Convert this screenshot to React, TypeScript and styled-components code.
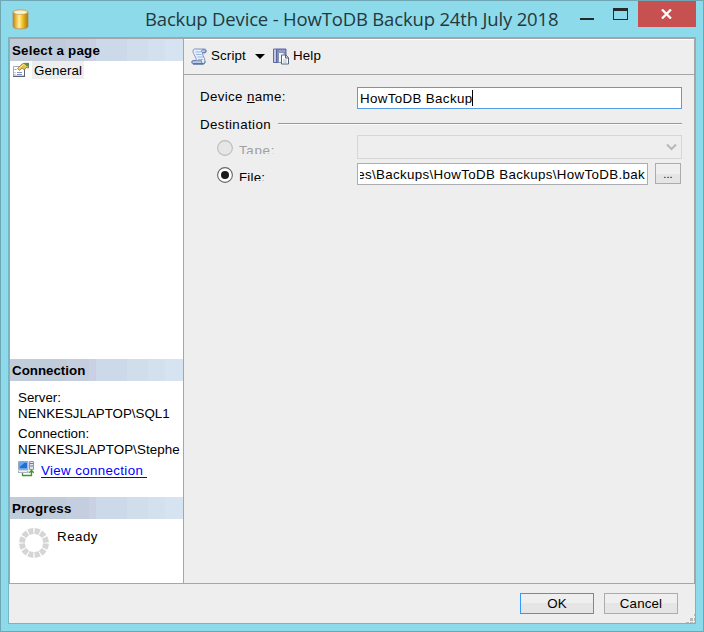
import React from "react";
import styled, { createGlobalStyle } from "styled-components";

const GlobalStyle = createGlobalStyle`
  * { box-sizing: border-box; }
  body {
    margin: 0;
    overflow: hidden;
    font-family: "Liberation Sans", Arial, sans-serif;
    font-size: 13.33px;
    line-height: 16px;
    color: #000;
  }
`;

const Window = styled.div`
  width: 704px;
  height: 632px;
  display: flex;
  flex-direction: column;
  background: #8ddbea;
  border: 1px solid #6fa7b4;
  padding: 0 7px 7px;
`;

const TitleBar = styled.header`
  height: 36px;
  flex: none;
  display: flex;
  align-items: flex-start;
`;

const AppIcon = styled.svg`
  margin: 8px 0 0 4px;
  flex: none;
`;

const Title = styled.h1<{ $spacing: number }>`
  margin: 5px 0 0 115px;
  width: 430px;
  font: 400 18.5px/26px "Open Sans", "Noto Sans", sans-serif;
  letter-spacing: ${(p) => p.$spacing}px;
  color: #26383d;
  white-space: nowrap;
`;

const Caption = styled.div`
  display: flex;
  margin-left: auto;
`;

const MinMax = styled.svg`
  display: block;
`;

const CloseButton = styled.button`
  width: 58px;
  height: 26px;
  border: 0;
  padding: 0;
  background: #c75050;
  display: flex;
  align-items: center;
  justify-content: center;
`;

const Client = styled.div`
  flex: 1;
  min-height: 0;
  border: 1px solid #77b5c2;
  background: #eee;
  display: flex;
  flex-direction: column;
`;

const Panels = styled.div`
  height: 546px;
  flex: none;
  display: flex;
  border: 1px solid #a5a5aa;
`;

const Sidebar = styled.aside`
  width: 174px;
  flex: none;
  background: #fff;
  border-right: 1px solid #a5a5aa;
  display: flex;
  flex-direction: column;
`;

const Section = styled.section<{ $height: number }>`
  height: ${(p) => p.$height}px;
  overflow: hidden;
`;

const SectionTitle = styled.h2<{ $spacing?: number }>`
  margin: 0;
  height: 22px;
  padding-left: 2px;
  font-size: 13.33px;
  font-weight: bold;
  line-height: 24px;
  letter-spacing: ${(p) => p.$spacing ?? 0}px;
  background: linear-gradient(
    90deg,
    #c1ccdb 0 56px,
    #c5cedf 56px 79px,
    #c9d2e4 79px 84px,
    #cccfe3 84px 86px,
    #cbd9e8 86px 117px,
    #d0deec 117px 138px,
    #d3e1ee 138px 155px,
    #d6e4f2 155px
  );
`;

const PageItem = styled.div`
  display: flex;
  height: 18px;
  padding-left: 3px;
`;

const PageName = styled.span`
  margin-left: 3px;
  padding: 2px 2px 0;
  width: 52px;
  background: #eee;
  letter-spacing: 0.1px;
`;

const Details = styled.div`
  padding: 9px 0 0 8px;
  width: 171px;
  white-space: nowrap;
  overflow: hidden;
`;

const Detail = styled.div<{ $gap?: number; $spacing?: number }>`
  margin-top: ${(p) => p.$gap ?? 0}px;
  letter-spacing: ${(p) => p.$spacing ?? 0}px;
`;

const LinkRow = styled.div`
  display: flex;
  margin-top: 3px;
`;

const Link = styled.a`
  margin: 2px 0 0 7px;
  width: 106px;
  height: 15px;
  line-height: 16px;
  color: #00f;
  border-bottom: 1px solid #00f;
  letter-spacing: 0.36px;
`;

const ProgressRow = styled.div`
  display: flex;
  padding: 9px 0 0 9px;
`;

const Ready = styled.span`
  margin: 1px 0 0 7px;
  letter-spacing: 0.5px;
`;

const Main = styled.main`
  flex: 1;
  min-width: 0;
`;

const Toolbar = styled.div`
  height: 36px;
  border-top: 1px solid #fff;
  border-bottom: 1px solid #a5a5aa;
  display: flex;
  align-items: center;
  padding: 0 0 2px 7px;
`;

const ToolText = styled.span<{ $width: number }>`
  width: ${(p) => p.$width}px;
  margin-left: 4px;
  letter-spacing: 0.15px;
`;

const DropArrow = styled.svg`
  margin: 0 8px 0 9px;
`;

const Form = styled.div`
  padding: 12px 12px 0 16px;
`;

const Row = styled.div<{ $height: number; $gap?: number }>`
  display: flex;
  height: ${(p) => p.$height}px;
  margin-top: ${(p) => p.$gap ?? 0}px;
`;

const Label = styled.label`
  width: 157px;
  padding-top: 2px;
  letter-spacing: 0.35px;
`;

const Mnemonic = styled.span`
  text-decoration: underline;
  text-underline-offset: 1px;
  text-decoration-thickness: 1px;
`;

const Field = styled.div<{ $focused?: boolean; $width: number }>`
  width: ${(p) => p.$width}px;
  height: 22px;
  border: 1px solid ${(p) => (p.$focused ? "#569de5" : "#abadb3")};
  background: #fff;
  padding: 3px 2px;
  display: flex;
  justify-content: ${(p) => (p.$focused ? "flex-start" : "flex-end")};
  white-space: nowrap;
`;

const FieldText = styled.span<{ $spacing: number; $end?: boolean }>`
  display: flex;
  min-width: 0;
  overflow: hidden;
  justify-content: ${(p) => (p.$end ? "flex-end" : "flex-start")};
  letter-spacing: ${(p) => p.$spacing}px;
`;

const Caret = styled.i`
  width: 1px;
  height: 16px;
  margin-top: -1px;
  background: #000;
`;

const GroupRule = styled.i`
  flex: 1;
  height: 2px;
  margin: 6px 0 0 7px;
  background: linear-gradient(#98989b 0 1px, #fafafa 1px);
`;

const GroupName = styled.span`
  width: 71px;
  letter-spacing: 0.4px;
`;

const Option = styled.div`
  width: 157px;
  padding-left: 17px;
  display: flex;
`;

const RadioIcon = styled.svg<{ $top: number }>`
  margin-top: ${(p) => p.$top}px;
`;

const OptionText = styled.span<{ $disabled?: boolean; $top: number; $height: number }>`
  margin: ${(p) => p.$top}px 0 0 5px;
  height: ${(p) => p.$height}px;
  overflow: hidden;
  letter-spacing: ${(p) => (p.$disabled ? 0.7 : 0.2)}px;
  color: ${(p) => (p.$disabled ? "#a0a0a0" : "#000")};
`;

const Combo = styled.div`
  width: 325px;
  height: 24px;
  border: 1px solid #d6d6d6;
  display: flex;
  align-items: center;
  justify-content: flex-end;
  padding-right: 4px;
`;

const PushButton = styled.button<{ $width: number; $primary?: boolean; $small?: boolean }>`
  width: ${(p) => p.$width}px;
  height: 21px;
  padding: 0;
  border: 1px solid ${(p) => (p.$primary ? "#3399ff" : "#acacac")};
  background: linear-gradient(#efefef 0 50%, #e5e5e5 50%);
  color: #000;
  font-family: inherit;
  font-size: ${(p) => (p.$small ? 11 : 13.33)}px;
  line-height: ${(p) => (p.$small ? 16 : 19)}px;
  letter-spacing: 0.15px;
`;

const Footer = styled.footer`
  flex: 1;
  display: flex;
  justify-content: flex-end;
  gap: 10px;
  padding: 9px 0 0;
`;

const Grip = styled.svg`
  align-self: flex-end;
  margin-left: -2px;
`;

const DatabaseIcon = () => (
  <AppIcon width="18" height="22" viewBox="0 0 18 22">
    <defs>
      <linearGradient id="gold">
        <stop offset="0" stopColor="#b98216" />
        <stop offset=".18" stopColor="#e9b43a" />
        <stop offset=".42" stopColor="#fff0a0" />
        <stop offset=".65" stopColor="#f1bd20" />
        <stop offset="1" stopColor="#a87512" />
      </linearGradient>
    </defs>
    <path d="M1 2.700v14.800c0 1.600 3 2.300 7.500 2.300s7.500-.7 7.500-2.300V2.700z" fill="url(#gold)" stroke="#b0915a" strokeWidth=".8" />
    <ellipse cx="8.500" cy="3.100" rx="7.400" ry="2.300" fill="#f5e8b0" stroke="#b79c62" strokeWidth=".8" />
    <ellipse cx="8.500" cy="3.400" rx="5.600" ry="1.400" fill="#faf2cd" />
  </AppIcon>
);

const PropertiesIcon = () => (
  <svg width="16" height="18" viewBox="0 0 16 18">
    <path d="M.5 5.500h11v9.500H.5z" fill="#fff" stroke="#a5a9b2" />
    <path d="M0 15.500h12M11.500 8v8" stroke="#5b6270" />
    <path d="M1.500 8.500h2m-2 3h1m-1 2h1" stroke="#8a97b8" />
    <path d="M4 11.500h5M4 13.500h5" stroke="#8390d0" />
    <path d="M4.500 7.500 9 3l2-.7h4.500V7L13 6.500 11.500 9 9 7 6.500 9.500z" fill="#e9be4c" stroke="#8f7a3a" strokeWidth=".8" />
    <path d="m6 7.500 4.500-4 2.500 1" fill="none" stroke="#fff0a8" />
    <path d="M11 2h5v4.500l-2-1.500-2-1z" fill="#5d8c54" />
  </svg>
);

const ScriptIcon = () => (
  <svg width="16" height="17" viewBox="0 0 16 17">
    <path d="M3.500 1h10c2.500 0 2.500 4 0 4H11.500c0 3 2.500 5 2.500 8 0 2-1 3-2.500 3h-9C0 16 0 12.500 2 12.500h3C6 9.500 2 6.500 2 3c0-1 .5-2 1.500-2z" fill="#e6f0fd" stroke="#7d93c4" />
    <path d="M4.500 4h5.500M5 6.500h5.500M6.500 9H12M7 11.500h5" stroke="#9db5dc" />
    <path d="M2 12.700h8.500c0 2 .5 2.800 1.500 2.800H2.500c-1.500 0-1.500-1.500-.5-2.800zM12 1.500c-2 .5-2 3 0 3h2.500V2z" fill="#b8cbe9" stroke="#5d72a3" strokeWidth=".8" />
    <path d="M2 16h10c1.500 0 2-1 2-2.500" fill="none" stroke="#4c608c" />
  </svg>
);

const HelpIcon = () => (
  <svg width="16" height="17" viewBox="0 0 16 17">
    <path d="M.5 1h12.500v13.500H.5z" fill="#7f86c4" stroke="#6268a5" />
    <path d="M1 1.500h2.500v12.500H1z" fill="#c3c7e6" />
    <path d="M3.500 1v13.500" stroke="#5e649f" />
    <path d="M6 3h6" stroke="#a9b0e0" />
    <path d="M5.500 4.500h4.500l2 2v8h-6.500z" fill="#eff4fb" stroke="#8696b0" />
    <path d="M8.500 7H13l2.500 2.500V16h-7z" fill="#fff" stroke="#52647f" />
    <path d="M12.500 7v3h3" fill="#cad5e2" stroke="#52647f" />
    <path d="M10 12h4m-4 2h4" stroke="#a9b8cc" />
  </svg>
);

const ConnectionIcon = () => (
  <svg width="16" height="16" viewBox="0 0 16 16">
    <path d="M.5.5h9.500v8H.5z" fill="#b9cfe9" stroke="#9ba9c0" />
    <path d="M1.500 1.500h7.500v6H1.500z" fill="#1f6fd6" />
    <path d="M1.500 1.500H7L1.500 6z" fill="#65a9f5" />
    <path d="M0 9.500h10.500v2.500H0z" fill="#a7b4c5" />
    <path d="M1 10.500h8" stroke="#eef4fb" />
    <path d="M11.500.5h4v8h-4z" fill="#dfe5ee" stroke="#8d98a9" />
    <path d="M12 2.500h3M12 5h3" stroke="#6b7e9d" />
    <path d="M4.500 12v2.500h9V9.500m-2.200 2.200 2.200-2.200 2.200 2.200" fill="none" stroke="#439321" strokeWidth="1.300" />
  </svg>
);

const Spinner = () => (
  <svg width="31" height="31" viewBox="0 0 31 31">
    {Array.from({ length: 12 }, (_, i) => (
      <path
        key={i}
        d="M11.900.4a15 15 0 0 1 6.200 0l-1.100 5.700a9.300 9.300 0 0 0-4 0z"
        fill="#d5d5d5"
        transform={`rotate(${15 + i * 30} 15 15)`}
      />
    ))}
  </svg>
);

const Radio = ({ selected, top }: { selected?: boolean; top: number }) => (
  <RadioIcon width="17" height="17" viewBox="0 0 17 17" $top={top}>
    <circle cx="8" cy="8" r="7.400" fill={selected ? "#fff" : "#e6e6e6"} stroke={selected ? "#666" : "#bcbcbc"} strokeWidth="1.100" />
    {selected && <circle cx="8" cy="8" r="4" fill="#1c1c1c" />}
  </RadioIcon>
);

export default function App() {
  return (
    <>
      <GlobalStyle />
      <Window>
        <TitleBar>
          <DatabaseIcon />
          <Title $spacing={-0.17}>Backup Device - HowToDB Backup 24th July 2018</Title>
          <Caption>
            <MinMax width="58" height="26" viewBox="0 0 58 26" shapeRendering="crispEdges">
              <path d="M0 17h14v2H0zM33 7h15v12H33zm1 3v8h13v-8z" fill="#25292b" fillRule="evenodd" />
            </MinMax>
            <CloseButton aria-label="Close">
              <svg width="12" height="10" viewBox="0 0 12 10">
                <path d="m1 .5 9 9m0-9-9 9" stroke="#fff" strokeWidth="2.300" />
              </svg>
            </CloseButton>
          </Caption>
        </TitleBar>
        <Client>
          <Panels>
            <Sidebar>
              <Section $height={320}>
                <SectionTitle $spacing={0.22}>Select a page</SectionTitle>
                <PageItem>
                  <PropertiesIcon />
                  <PageName>General</PageName>
                </PageItem>
              </Section>
              <Section $height={138}>
                <SectionTitle>Connection</SectionTitle>
                <Details>
                  <Detail>Server:</Detail>
                  <Detail>NENKESJLAPTOP\SQL1</Detail>
                  <Detail $gap={4}>Connection:</Detail>
                  <Detail $spacing={0.1}>NENKESJLAPTOP\Stephe</Detail>
                  <LinkRow>
                    <ConnectionIcon />
                    <Link>View connection</Link>
                  </LinkRow>
                </Details>
              </Section>
              <Section $height={86}>
                <SectionTitle $spacing={0.22}>Progress</SectionTitle>
                <ProgressRow>
                  <Spinner />
                  <Ready>Ready</Ready>
                </ProgressRow>
              </Section>
            </Sidebar>
            <Main>
              <Toolbar>
                <ScriptIcon />
                <ToolText $width={35}>Script</ToolText>
                <DropArrow width="10" height="5" viewBox="0 0 10 5">
                  <path d="M0 0h10L5 5z" />
                </DropArrow>
                <HelpIcon />
                <ToolText $width={32}>Help</ToolText>
              </Toolbar>
              <Form>
                <Row $height={22}>
                  <Label>
                    Device <Mnemonic>n</Mnemonic>ame:
                  </Label>
                  <Field $width={325} $focused>
                    <FieldText $spacing={0.36}>HowToDB Backup</FieldText>
                    <Caret />
                  </Field>
                </Row>
                <Row $height={18} $gap={8}>
                  <GroupName>Destination</GroupName>
                  <GroupRule />
                </Row>
                <Row $height={24}>
                  <Option>
                    <Radio top={5} />
                    <OptionText $disabled $top={8} $height={11}>Tape:</OptionText>
                  </Option>
                  <Combo>
                    <svg width="11" height="8" viewBox="0 0 11 8">
                      <path d="m1 1.500 4.500 4.500L10 1.500" fill="none" stroke="#b8b8b8" strokeWidth="2" />
                    </svg>
                  </Combo>
                </Row>
                <Row $height={22} $gap={4}>
                  <Option>
                    <Radio top={4} selected />
                    <OptionText $top={7} $height={11}>File:</OptionText>
                  </Option>
                  <Field $width={291}>
                    <FieldText $spacing={0.34} $end>es\Backups\HowToDB Backups\HowToDB.bak</FieldText>
                  </Field>
                  <Row as="span" $height={21}>
                    <i style={{ width: 7 }} />
                    <PushButton $width={26} $small>...</PushButton>
                  </Row>
                </Row>
              </Form>
            </Main>
          </Panels>
          <Footer>
            <PushButton $width={74} $primary>OK</PushButton>
            <PushButton $width={74}>Cancel</PushButton>
            <Grip width="9" height="9" viewBox="0 0 9 9" shapeRendering="crispEdges">
              <path d="M8 0h1v2H8zM4 4h3v3H4zM8 4h1v3H8zM0 8h3v1H0zM4 8h3v1H4zM8 8h1v1H8z" fill="#b9b9b9" />
            </Grip>
          </Footer>
        </Client>
      </Window>
    </>
  );
}
